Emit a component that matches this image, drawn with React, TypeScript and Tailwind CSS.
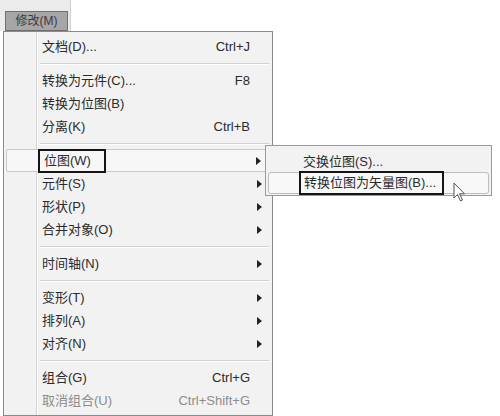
import React from 'react';

type Item =
  | { sep: true }
  | { sep?: false; label: string; shortcut?: string; arrow?: boolean; disabled?: boolean; boxed?: boolean };

const items: Item[] = [
  { label: '文档(D)...', shortcut: 'Ctrl+J' },
  { sep: true },
  { label: '转换为元件(C)...', shortcut: 'F8' },
  { label: '转换为位图(B)' },
  { label: '分离(K)', shortcut: 'Ctrl+B' },
  { sep: true },
  { label: '位图(W)', arrow: true, boxed: true },
  { label: '元件(S)', arrow: true },
  { label: '形状(P)', arrow: true },
  { label: '合并对象(O)', arrow: true },
  { sep: true },
  { label: '时间轴(N)', arrow: true },
  { sep: true },
  { label: '变形(T)', arrow: true },
  { label: '排列(A)', arrow: true },
  { label: '对齐(N)', arrow: true },
  { sep: true },
  { label: '组合(G)', shortcut: 'Ctrl+G' },
  { label: '取消组合(U)', shortcut: 'Ctrl+Shift+G', disabled: true },
];

const Arrow = () => (
  <svg width="5" height="8" viewBox="0 0 5 8" className="block">
    <path d="M0 0 L5 4 L0 8 Z" fill="#222" />
  </svg>
);

const App: React.FC = () => {
  return (
    <div
      className="relative w-[500px] h-[416px] bg-white overflow-hidden text-[13px] text-[#2b2b2b]"
      style={{ fontFamily: '"Liberation Sans", "Noto Sans CJK SC", sans-serif' }}
    >
      {/* menu bar strip with the open tab */}
      <div className="w-[71px] h-[31px] bg-[#ebebeb] border-r border-[#cfcfcf] pt-[11px] pl-[5px]">
        <div className="w-[63px] h-[20px] bg-[#a6a6a6] border border-[#707070] flex items-center justify-center text-[12px] text-[#3c3c3c]">
          修改(M)
        </div>
      </div>

      {/* main dropdown */}
      <div className="relative ml-[3px] w-[270px] bg-[#f2f2f2] border border-[#8a8a8a] pt-[3px] pb-[3px]">
        <div className="absolute left-[32px] top-0 bottom-0 w-[2px] border-l border-[#d4d4d4] border-r-white border-r" />
        {items.map((it, i) =>
          it.sep ? (
            <div key={i} className="h-[11px] flex flex-col justify-center ml-[36px] mr-[3px]">
              <div className="h-px bg-[#d2d2d2]" />
              <div className="h-px bg-white" />
            </div>
          ) : (
            <div
              key={i}
              className={`relative h-[23px] flex items-center ${
                it.boxed ? 'mx-[2px] bg-[#f7f7f7] border border-[#c9c9c9] rounded-[2px] pl-[36px]' : 'pl-[38px]'
              } ${it.disabled ? 'text-[#8c8c8c]' : ''}`}
            >
              {it.boxed ? (
                <span className="-ml-[5px] pl-[4px] w-[68px] h-[24px] flex items-center border-2 border-[#151515]">
                  {it.label}
                </span>
              ) : (
                <span className="flex-1">{it.label}</span>
              )}
              {it.boxed && <span className="flex-1" />}
              {it.shortcut && <span>{it.shortcut}</span>}
              <span className={`w-[22px] flex items-center pl-[7px] ${it.boxed ? 'mr-[-2px]' : ''}`}>
                {it.arrow && <Arrow />}
              </span>
            </div>
          )
        )}
      </div>

      {/* sub menu for 位图 */}
      <div className="absolute left-[265px] top-[145px] w-[227px] bg-[#f2f2f2] border border-[#9a9a9a] pt-[5px] pb-[1px]">
        <div className="h-[21px] flex items-center pl-[37px]">交换位图(S)...</div>
        <div className="h-[22px] mx-[2px] flex items-center pl-[35px] bg-[#f8f8f8] border border-[#bdbdbd] rounded-[3px]">
          <span className="-ml-[5px] pl-[3px] w-[145px] h-[24px] flex items-center border-2 border-[#151515]">
            转换位图为矢量图(B)...
          </span>
        </div>
      </div>

      {/* mouse cursor */}
      <svg className="absolute left-[453px] top-[182px]" width="14" height="20" viewBox="0 0 14 20">
        <path d="M1 1 L1 16 L4.5 12.5 L7.5 19 L9.5 18 L6.5 11.8 L11.5 11.8 Z" fill="white" stroke="#555" strokeWidth="1" strokeLinejoin="round" />
      </svg>
    </div>
  );
};

export default App;
